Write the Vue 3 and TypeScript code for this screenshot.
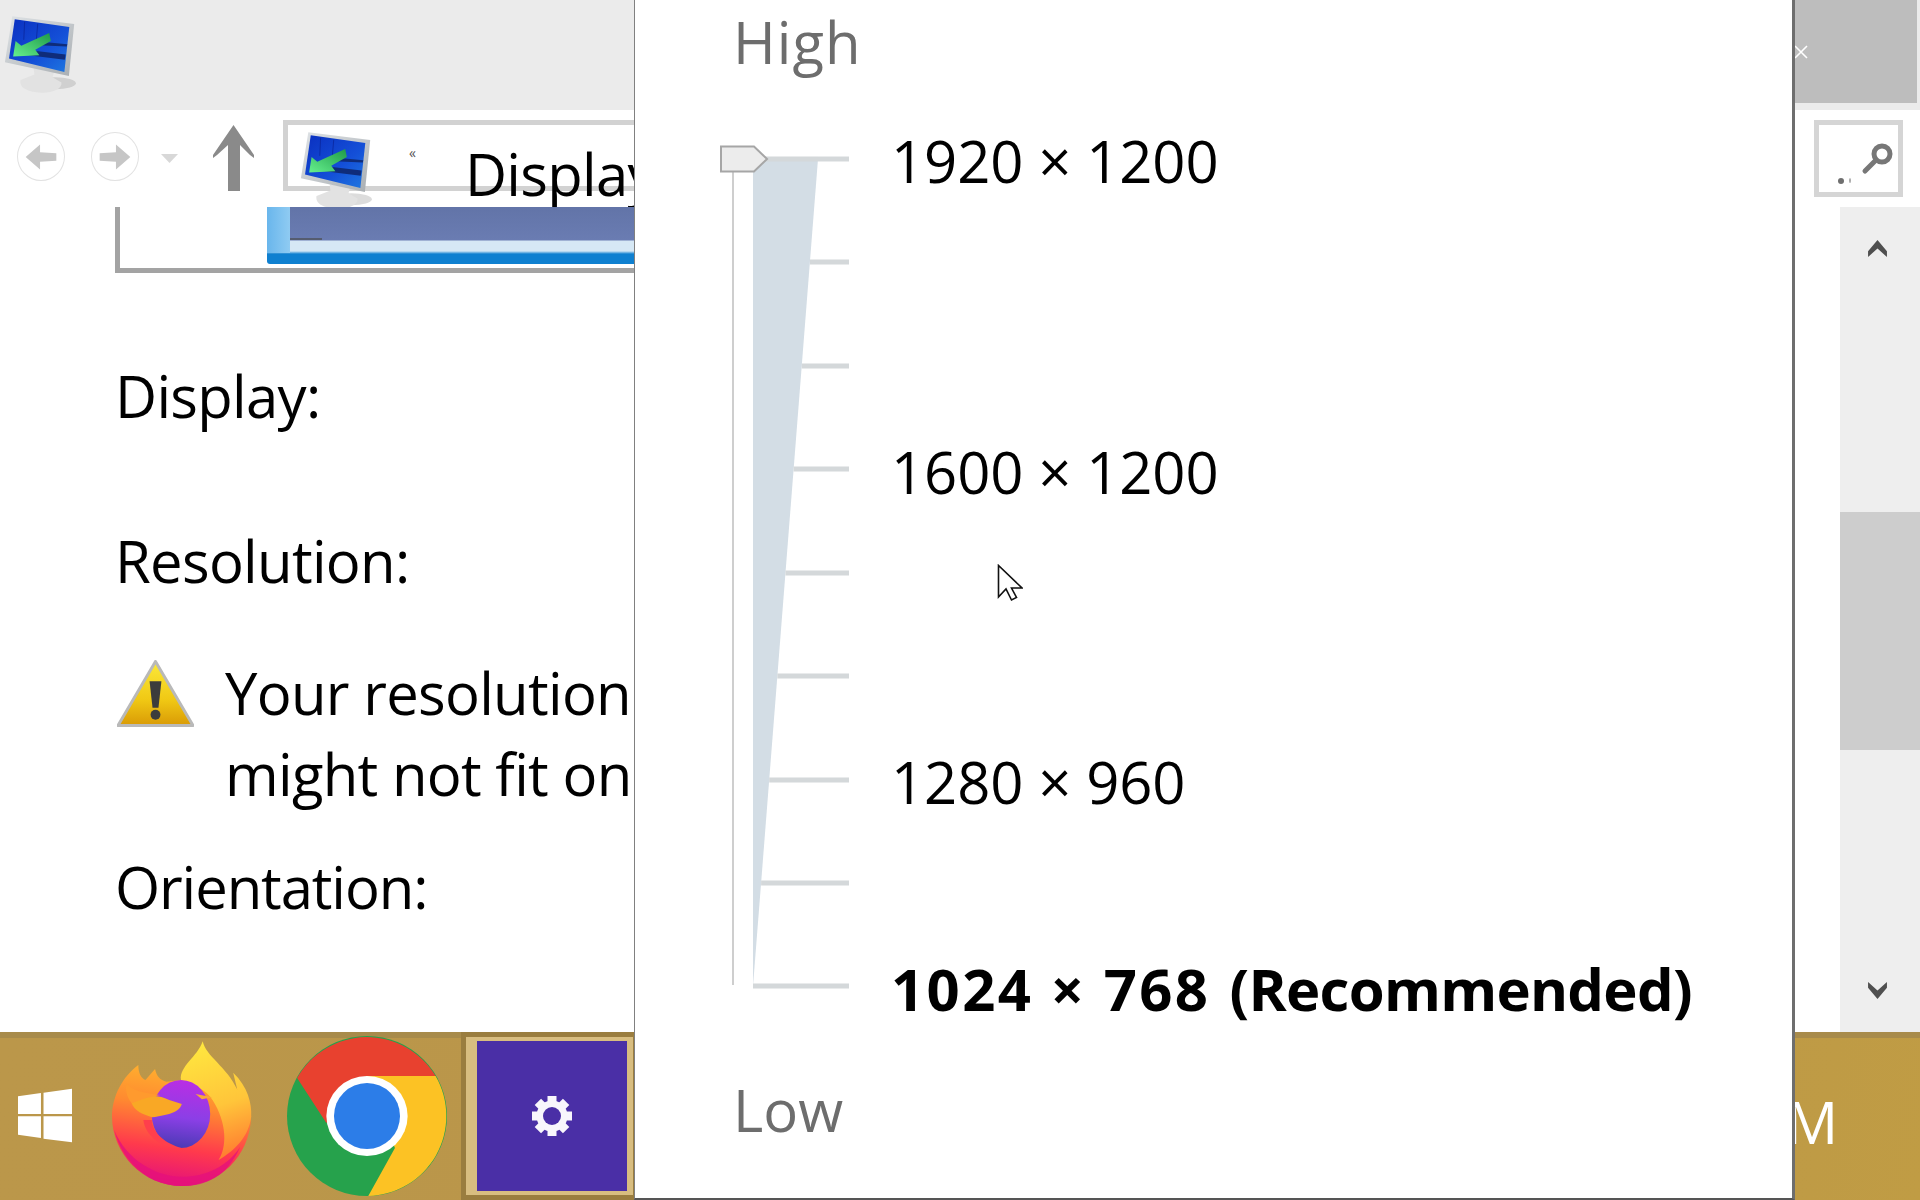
<script setup lang="ts">
const ticks: number[] = [159, 262, 366, 469, 573, 676, 780, 883, 986]
const gearTeeth: number[] = [0, 45, 90, 135]
const rows = [
  { label: '1920 × 1200', note: '', bold: false },
  { label: '', note: '', bold: false },
  { label: '', note: '', bold: false },
  { label: '1600 × 1200', note: '', bold: false },
  { label: '', note: '', bold: false },
  { label: '', note: '', bold: false },
  { label: '1280 × 960', note: '', bold: false },
  { label: '', note: '', bold: false },
  { label: '1024 × 768', note: '(Recommended)', bold: true },
]
function tickStart(y: number): number {
  return 818 - ((y - 159) / (986 - 159)) * 65
}
</script>

<template>
  <div class="screen">
    <svg class="defs" width="0" height="0">
      <defs>
        <linearGradient id="scr" x1="0" y1="0" x2="1" y2="1">
          <stop offset="0" stop-color="#0a2fc0" />
          <stop offset="0.6" stop-color="#1450d8" />
          <stop offset="1" stop-color="#1f78e0" />
        </linearGradient>
        <linearGradient id="arr" x1="1" y1="0" x2="0" y2="1">
          <stop offset="0" stop-color="#1f9a48" />
          <stop offset="1" stop-color="#66f08e" />
        </linearGradient>
        <linearGradient id="bez" x1="0" y1="0" x2="1" y2="1">
          <stop offset="0" stop-color="#dfe3e6" />
          <stop offset="1" stop-color="#a9aeb2" />
        </linearGradient>
        <symbol id="mon" viewBox="0 40 200 245" preserveAspectRatio="none">
          <ellipse cx="135" cy="250" rx="50" ry="18" fill="#a8a8a8" opacity=".4" />
          <path d="M82 205 L132 216 L128 232 L150 248 C152 268 125 280 100 278 C72 276 46 266 50 240 L84 224 Z" fill="#e2e2e2" />
          <path d="M30 50 L181 73 L168 228 L12 187 Z" fill="url(#bez)" />
          <path d="M36 59 L169 82 L157 216 L22 176 Z" fill="url(#scr)" />
          <path d="M60 66 L58 120 M92 72 L88 130" stroke="#0a259a" stroke-width="2" />
          <path d="M100 126 L164 133 L163 140 L94 136 Z M78 152 L160 164 L158 180 L70 166 Z" fill="#0f2c7a" />
          <path d="M120 100 L124 124 L86 150 L96 166 L32 170 L38 124 L52 138 Z" fill="url(#arr)" />
        </symbol>
        <linearGradient id="ffx" x1="0.6" y1="0" x2="0.45" y2="1">
          <stop offset="0" stop-color="#ffb52e" />
          <stop offset="0.35" stop-color="#ff8a30" />
          <stop offset="0.7" stop-color="#ff3a4c" />
          <stop offset="1" stop-color="#e4107c" />
        </linearGradient>
        <linearGradient id="ftail" x1="0.4" y1="0" x2="0.6" y2="1">
          <stop offset="0" stop-color="#ffe63f" />
          <stop offset="0.55" stop-color="#ffc53a" />
          <stop offset="1" stop-color="#ff7b30" />
        </linearGradient>
        <linearGradient id="fglobe" x1="0.5" y1="0" x2="0.4" y2="1">
          <stop offset="0" stop-color="#b92ee4" />
          <stop offset="0.55" stop-color="#8b3fe6" />
          <stop offset="1" stop-color="#4a3ab4" />
        </linearGradient>
      </defs>
    </svg>

    <header class="titlebar">
      <svg class="title-icon"><use href="#mon" width="82" height="82" /></svg>
      <div class="close-block">
        <svg class="close-x" viewBox="0 0 14 14"><path d="M1 1 L13 13 M13 1 L1 13" stroke="#fff" stroke-width="1.6" /></svg>
      </div>
    </header>

    <nav class="navbar">
      <div class="round">
        <svg viewBox="0 0 48 49"><path d="M8 25 L23 12 L23 20 L40 21 L40 29 L23 30 L23 38 Z" fill="#c6c6c6" /></svg>
      </div>
      <div class="round round-next">
        <svg viewBox="0 0 48 49"><path d="M40 25 L25 12 L25 20 L8 21 L8 29 L25 30 L25 38 Z" fill="#c6c6c6" /></svg>
      </div>
      <svg class="drop" viewBox="0 0 19 10"><path d="M1 1 L18 1 L9.5 10 Z" fill="#d8d8d8" /></svg>
      <svg class="up" viewBox="0 0 41 66"><path d="M20.5 0 L41 30 L41 33 L37 30 L27 20 L27 66 L15 66 L15 20 L4 30 L0 33 L0 30 Z" fill="#8a8a8a" /></svg>
      <div class="address">
        <svg class="addr-icon"><use href="#mon" width="82" height="82" /></svg>
        <span class="chev">«</span>
        <span class="addr-text">Display</span>
      </div>
      <div class="search">
        <svg class="lens" viewBox="0 0 32 32"><circle cx="21" cy="11" r="8" fill="none" stroke="#777" stroke-width="5" /><path d="M14 18 L4 28" stroke="#777" stroke-width="5" stroke-linecap="round" /></svg>
        <span class="dot"></span>
        <span class="dot dot-small"></span>
      </div>
    </nav>

    <div class="body">
      <main class="main">
        <div class="frame">
          <div class="shot">
            <span class="shot-line"></span>
          </div>
        </div>
        <p class="label label-display">Display:</p>
        <p class="label label-res">Resolution:</p>
        <div class="warn">
          <svg class="warn-icon" viewBox="0 0 78 68">
            <defs>
              <linearGradient id="wy" x1="0" y1="0" x2="0" y2="1">
                <stop offset="0" stop-color="#fbe93a" />
                <stop offset="0.6" stop-color="#f0c814" />
                <stop offset="1" stop-color="#d99a06" />
              </linearGradient>
            </defs>
            <path d="M39 1 L77 66 L1 66 Z" fill="url(#wy)" stroke="#b9b9b9" stroke-width="3" stroke-linejoin="round" />
            <path d="M33 21 L45 21 L42 48 L36 48 Z" fill="#3c3c3c" />
            <ellipse cx="39" cy="55" rx="5" ry="5" fill="#3c3c3c" />
          </svg>
          <p class="warn-text">Your resolution<br />might not fit on</p>
        </div>
        <p class="label label-orient">Orientation:</p>
      </main>
      <aside class="scrollbar">
        <svg class="sc-chev" viewBox="0 0 20 18"><path d="M0 12 L10 0 L20 12 L20 18 L10 9 L0 18 Z" fill="#4f4f4f" /></svg>
        <div class="sc-thumb"></div>
        <svg class="sc-chev sc-down" viewBox="0 0 20 18"><path d="M0 0 L10 9 L20 0 L20 6 L10 18 L0 6 Z" fill="#4f4f4f" /></svg>
      </aside>
    </div>

    <footer class="taskbar">
      <svg class="start" viewBox="43 265 127 165" preserveAspectRatio="none">
        <path d="M43 290 L97 280 L97 343 L43 343 Z M103 279 L170 267 L170 343 L103 343 Z M43 350 L97 350 L97 415 L43 405 Z M103 350 L170 350 L170 428 L103 417 Z" fill="#fff" />
      </svg>
      <svg class="firefox" viewBox="265 120 335 438" preserveAspectRatio="none">
        <path d="M430 240 L395 245 C380 240 372 230 368 207 L345 240 C335 235 328 220 328 195 C290 230 265 290 265 350 C265 460 340 558 432 558 C520 558 595 470 598 350 C598 300 560 240 500 230 Z" fill="url(#ffx)" />
        <path d="M270 390 C300 480 370 530 432 530 C490 530 540 500 572 440 C540 530 490 558 432 558 C360 558 290 490 270 390 Z" fill="#e4107c" opacity=".75" />
        <path d="M482 124 C490 170 540 200 565 270 L555 218 C590 260 600 310 598 350 C592 410 560 450 520 480 C545 430 535 350 500 290 C480 262 445 245 430 240 C425 200 470 170 482 124 Z" fill="url(#ftail)" />
        <ellipse cx="430" cy="342" rx="70" ry="102" fill="url(#fglobe)" />
        <path d="M465 282 L505 292 L480 298 Z" fill="#f7a83a" />
        <path d="M312 310 C335 280 380 284 402 300 L432 312 C425 340 395 345 362 352 C340 345 318 332 312 310 Z" fill="#f9a825" />
        <path d="M300 250 C310 270 340 280 380 285 L345 295 L312 310 C300 290 296 270 300 250 Z" fill="#ff9a2e" />
        <path d="M360 360 C362 400 395 432 432 444 C390 450 345 410 340 360 Z" fill="#ff3f4c" />
      </svg>
      <svg class="chrome" viewBox="0 0 126 160" preserveAspectRatio="none">
        <ellipse cx="63" cy="80" rx="63" ry="80" fill="#26a24c" />
        <path d="M8 42 A63 80 0 0 1 117 40 L62 40 L31 87 Z" fill="#e8412f" />
        <path d="M117 40 A63 80 0 0 1 64 160 L85 112 L62 40 Z" fill="#fcc224" />
        <ellipse cx="63" cy="80" rx="32" ry="40" fill="#fff" />
        <ellipse cx="63" cy="80" rx="26" ry="33" fill="#2c7de8" />
      </svg>
      <div class="active-task">
        <div class="task-tile">
          <svg class="gear" viewBox="0 0 40 40">
            <rect v-for="a in gearTeeth" :key="a" x="15.5" y="0" width="9" height="40" fill="#f8f6fc" :transform="`rotate(${a} 20 20)`" />
            <circle cx="20" cy="20" r="15.5" fill="#f8f6fc" />
            <circle cx="20" cy="20" r="9" fill="#4a2fa6" />
          </svg>
        </div>
      </div>
      <span class="clock">M</span>
    </footer>

    <section class="popup">
      <div class="high">High</div>
      <div class="slider">
        <svg class="track" viewBox="0 0 140 860" width="140" height="860">
          <path d="M39 14 L104 14 L39 841 Z" fill="#d3dde5" />
          <path d="M19 27 L19 840" stroke="#adadad" stroke-width="1.2" />
          <path v-for="y in ticks" :key="y" :d="`M${tickStart(y) - 714} ${y - 145} L135 ${y - 145}`" stroke="#d4d8da" stroke-width="5" />
          <path d="M39 14 L104 14" stroke="#d4d8da" stroke-width="5" />
          <path d="M7 1.5 L40 1.5 L53 14 L40 26.5 L7 26.5 Z" fill="#ececec" stroke="#a6a6a6" stroke-width="2" />
        </svg>
        <div class="res-list">
          <div v-for="(r, i) in rows" :key="i" class="res-row" :class="{ 'res-bold': r.bold }">
            <span class="res-label">{{ r.label }}</span>
            <span v-if="r.note" class="res-note">{{ r.note }}</span>
          </div>
        </div>
      </div>
      <div class="low">Low</div>
      <svg class="cursor" viewBox="0 0 26 38"><path d="M1.5 1.5 L1.5 33 L9 25 L14.5 36 L19.5 33.5 L14.5 24 L25 24 Z" fill="#fff" stroke="#111" stroke-width="1.6" stroke-linejoin="miter" /></svg>
    </section>
  </div>
</template>

<style>
html, body { margin: 0; padding: 0; background: #fff; }
</style>

<style scoped>
.screen {
  position: relative;
  width: 1920px;
  height: 1200px;
  overflow: hidden;
  background: #fff;
  display: flex;
  flex-direction: column;
  font-family: "Open Sans", "Noto Sans", sans-serif;
  color: #000;
}
.defs { position: absolute; }
.titlebar {
  height: 110px;
  flex: none;
  background: #ebebeb;
  display: flex;
  justify-content: space-between;
}
.title-icon { width: 82px; height: 82px; margin: 13px 0 0 0; }
.close-block {
  width: 122px;
  height: 103px;
  margin-right: 3px;
  background: #bdbdbd;
  display: flex;
  align-items: center;
}
.close-x { width: 14px; height: 14px; margin-left: -1px; }
.navbar {
  height: 97px;
  flex: none;
  display: flex;
  overflow: hidden;
  background: #fff;
}
.round {
  width: 48px;
  height: 49px;
  box-sizing: border-box;
  border: 1.5px solid #e2e2e2;
  border-radius: 50%;
  margin: 22px 0 0 17px;
  flex: none;
}
.round svg { display: block; width: 100%; height: 100%; }
.round-next { margin-left: 26px; }
.drop { width: 19px; height: 10px; margin: 43px 0 0 21px; flex: none; }
.up { width: 41px; height: 66px; margin: 15px 0 0 34px; flex: none; }
.address {
  width: 420px;
  height: 71px;
  box-sizing: border-box;
  margin: 10px 0 0 29px;
  border: 5px solid #d2d2d2;
  flex: none;
  display: flex;
  position: relative;
}
.addr-icon { width: 82px; height: 82px; margin: 4px 0 0 8px; flex: none; }
.chev { font-size: 14px; color: #555; margin: 18px 0 0 31px; line-height: 20px; flex: none; }
.addr-text { font-size: 58px; line-height: 78px; margin: 10px 0 0 49px; letter-spacing: -0.7px; white-space: nowrap; flex: none; }
.search {
  width: 89px;
  height: 77px;
  box-sizing: border-box;
  margin: 10px 17px 0 auto;
  border: 5px solid #d5d5d5;
  position: relative;
  flex: none;
}
.lens { position: absolute; left: 42px; top: 18px; width: 32px; height: 32px; }
.dot { position: absolute; left: 19px; top: 53px; width: 6px; height: 6px; border-radius: 50%; background: #6f6f6f; }
.dot-small { left: 30px; width: 2px; height: 5px; background: #aaa; }
.body { flex: 1; display: flex; min-height: 0; }
.main { flex: 1; min-width: 0; overflow: hidden; }
.frame {
  margin-left: 115px;
  width: 519px;
  height: 66px;
  box-sizing: border-box;
  border-left: 5px solid #a3a3a3;
  border-bottom: 5px solid #a3a3a3;
}
.shot {
  margin-left: 147px;
  height: 57px;
  position: relative;
  border-radius: 0 0 0 3px;
  background: linear-gradient(to bottom, #6274a8 0, #6a7cb2 33px, #d6e8f5 34px, #d6e8f5 44px, #0f80d0 47px, #0f80d0 57px);
}
.shot::before {
  content: "";
  position: absolute;
  left: 0;
  top: 0;
  height: 46px;
  width: 23px;
  background: linear-gradient(to right, #69b6ec, #8fcbf2);
}
.shot-line { position: absolute; left: 23px; top: 31px; width: 32px; height: 2px; background: #555c70; }
.label {
  margin: 0 0 0 115px;
  font-size: 58px;
  line-height: 80px;
  letter-spacing: -0.7px;
  white-space: nowrap;
}
.label-display { margin-top: 83px; }
.label-res { margin-top: 85px; }
.warn { display: flex; margin: 51px 0 0 117px; }
.warn-icon { width: 77px; height: 68px; margin-top: 8px; flex: none; }
.warn-text {
  margin: 0 0 0 31px;
  font-size: 58px;
  line-height: 81px;
  letter-spacing: -0.7px;
  white-space: nowrap;
}
.label-orient { margin-top: 33px; letter-spacing: -1.1px; }
.scrollbar {
  width: 80px;
  flex: none;
  background: #eeeeee;
  display: flex;
  flex-direction: column;
  align-items: center;
  position: relative;
}
.sc-chev { width: 19px; height: 17px; margin: 33px 6px 0 0; flex: none; }
.sc-down { margin: 0 6px 33px 0; flex: none; }
.sc-thumb { width: 80px; height: 238px; margin: 255px 0 auto; background: #cdcdcd; flex: none; }
.taskbar {
  height: 168px;
  flex: none;
  box-sizing: border-box;
  border-top: 6px solid #a88b4b;
  background: linear-gradient(100deg, #bb974a 0%, #b9954a 60%, #c09c44 100%);
  display: flex;
  position: relative;
}
.start { width: 54px; height: 55px; margin: 50px 0 0 18px; flex: none; }
.firefox { width: 140px; height: 146px; margin: 2px 0 0 40px; flex: none; }
.chrome { width: 160px; height: 160px; margin: -2px 0 0 35px; flex: none; }
.active-task {
  width: 173px;
  margin: -6px 0 0 14px;
  background: #9a7d3f;
  flex: none;
  box-sizing: border-box;
  padding: 5px 0 0 5px;
}
.task-tile {
  width: 167px;
  height: 158px;
  box-sizing: border-box;
  border-style: solid;
  border-color: #d8bd80;
  border-width: 4px 6px 4px 11px;
  background: #4a2fa6;
  display: flex;
  align-items: center;
  justify-content: center;
}
.gear { width: 40px; height: 40px; }
.clock {
  position: absolute;
  left: 1786px;
  top: 44px;
  font-size: 58px;
  line-height: 80px;
  color: #fff;
}
.popup {
  position: absolute;
  left: 634px;
  top: 0;
  width: 1161px;
  height: 1200px;
  box-sizing: border-box;
  background: #fff;
  border-left: 1px solid #808080;
  border-right: 3px solid #6e6e6e;
  border-bottom: 2px solid #555;
}
.high, .low {
  font-size: 58px;
  line-height: 80px;
  color: #6d6d6d;
  margin-left: 98px;
}
.high { margin-top: 2px; height: 143px; letter-spacing: 1px; }
.low { margin-top: -51px; }
.slider { display: flex; height: 976px; margin-left: 79px; position: relative; }
.track { flex: none; display: block; }
.res-list { margin: -40px 0 0 37px; }
.res-row {
  height: 103.5px;
  font-size: 58px;
  line-height: 103.5px;
  letter-spacing: -0.1px;
  white-space: nowrap;
  padding-top: 4px;
  box-sizing: border-box;
  display: flex;
}
.res-bold { font-weight: 700; }
.res-bold .res-label { letter-spacing: 2.4px; }
.res-note { letter-spacing: -0.7px; margin-left: 19px; }
.cursor { position: absolute; left: 362px; top: 564px; width: 26px; height: 38px; }
</style>
